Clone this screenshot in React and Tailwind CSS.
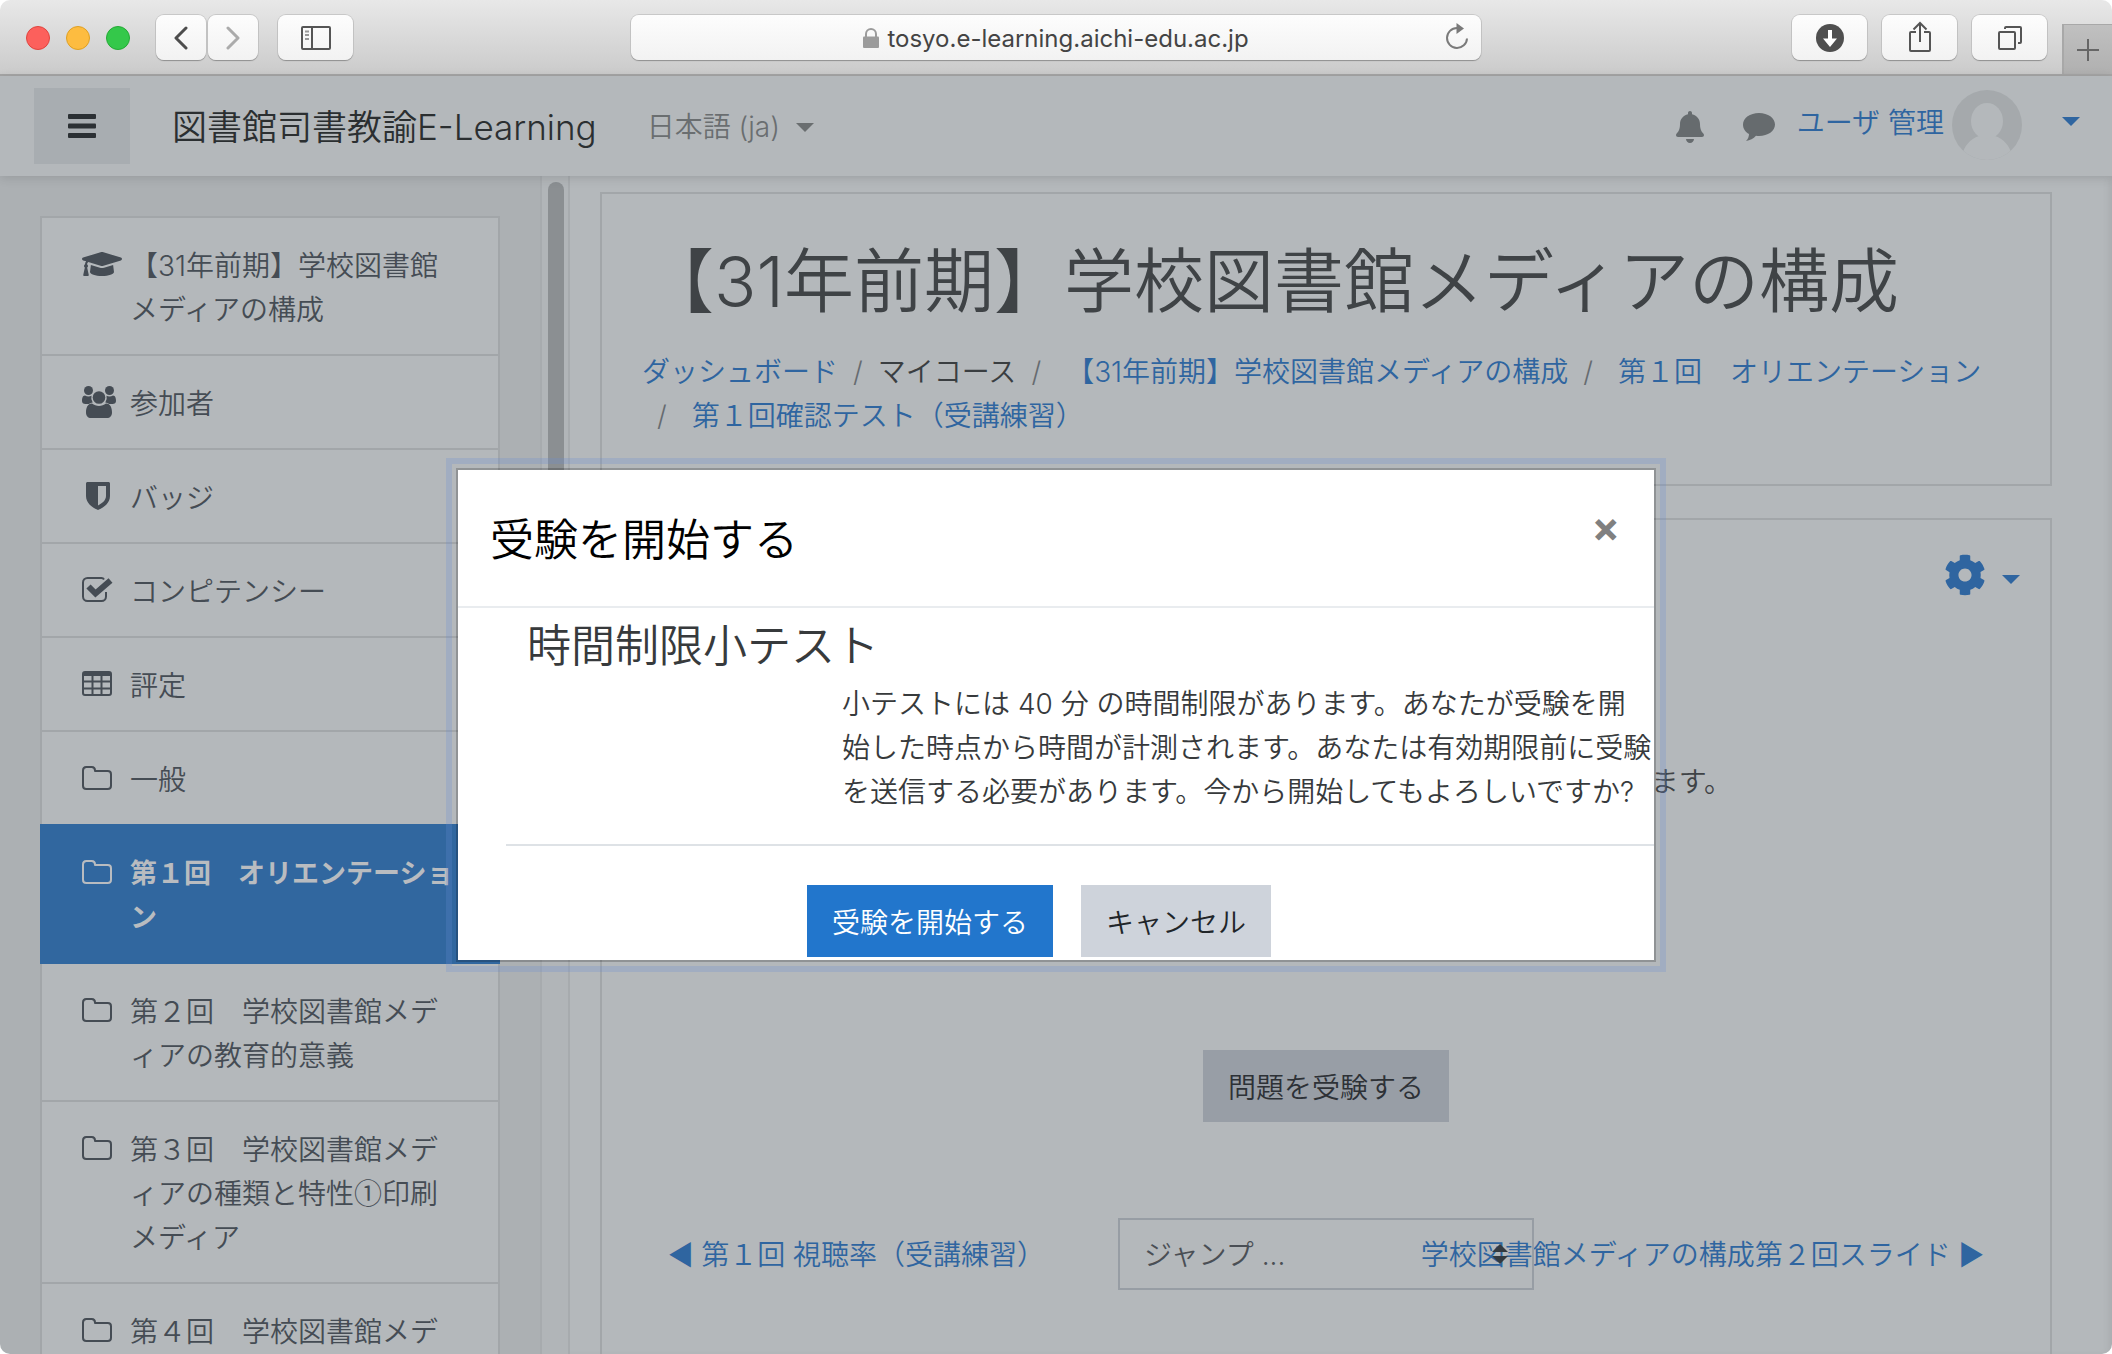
import React from 'react';
import { FaBell, FaCog, FaGraduationCap } from 'react-icons/fa';

const navItems = [
  { id: 'course', icon: 'course', label: '【31年前期】学校図書館メディアの構成' },
  { id: 'users', icon: 'users', label: '参加者' },
  { id: 'badges', icon: 'badge', label: 'バッジ' },
  { id: 'competencies', icon: 'check', label: 'コンピテンシー' },
  { id: 'grades', icon: 'grades', label: '評定' },
  { id: 'general', icon: 'folder', label: '一般' },
  { id: 'section-1', icon: 'folder', label: '第１回　オリエンテーション', active: true },
  { id: 'section-2', icon: 'folder', label: '第２回　学校図書館メディアの教育的意義' },
  {
    id: 'section-3',
    icon: 'folder',
    // Inter's circled digit is too wide, take it from the CJK face
    label: <>第３回　学校図書館メディアの種類と特性<span className="leading-none font-['Noto_Sans_CJK_JP',sans-serif]">①</span>印刷メディア</>,
  },
  { id: 'section-4', icon: 'folder', label: '第４回　学校図書館メデ' },
];

function FolderIcon() {
  return (
    <svg viewBox="0 0 30 24" className="w-[30px] h-6" fill="none" stroke="currentColor" strokeWidth="2" strokeLinejoin="round">
      <path d="M1 4.500C1 2.500 2.300 1 4.300 1h5.400c2 0 3.300 1.500 3.300 3.500V5h12.700C27.700 5 29 6.300 29 8.200v11.500c0 2-1.300 3.300-3.300 3.300H4.300C2.300 23 1 21.700 1 19.700z" />
    </svg>
  );
}

function UsersIcon() {
  return (
    <svg viewBox="0 0 34 32" className="w-[34px] h-8" fill="currentColor">
      <circle cx="6.500" cy="4.500" r="4.500" />
      <circle cx="27.500" cy="4.500" r="4.500" />
      <path d="M3 9.500c2 1.300 4.500 1.300 6.500.3a8 8 0 0 0 1.200 6.700c-1.500.1-2.800.6-3.900 1.500H3.500C1.300 18 0 17 0 15c0-2.500.6-5.500 3-5.500zM31 9.500c-2 1.300-4.500 1.300-6.500.3a8 8 0 0 1-1.200 6.700c1.500.1 2.800.6 3.900 1.500h3.300c2.200 0 3.500-1 3.500-3 0-2.500-.6-5.500-3-5.500z" />
      <circle cx="17" cy="11.500" r="6.300" />
      <path d="M10 17.500c4 3.300 10 3.300 14 0 4.500 0 6 4.500 6 9 0 3.500-2 5.500-5 5.500H9c-3 0-5-2-5-5.500 0-4.500 1.500-9 6-9z" />
    </svg>
  );
}

function ShieldIcon() {
  return (
    <svg viewBox="0 0 24 28" className="w-6 h-7 ml-1" fill="currentColor">
      <path fillRule="evenodd" d="M1.500 0h21c.8 0 1.500.7 1.500 1.500V14c0 7-6 11.500-12 14C6 25.500 0 21 0 14V1.500C0 .7.7 0 1.500 0zM12 4v19.500c4.500-2.300 8-5.500 8-9.500V4z" />
    </svg>
  );
}

function CheckIcon() {
  return (
    <svg viewBox="0 0 31 26" className="w-[31px] h-[26px]" fill="none" stroke="currentColor">
      <path strokeWidth="2" d="M22 2.500C21.500 1.500 20.500 1 19.500 1H5.500C3 1 1 3 1 5.500v14C1 22 3 24 5.500 24h14c2.500 0 4.500-2 4.500-4.500V15" />
      <path strokeWidth="6" d="M6.500 9.500l7 7L28.500 3.500" />
    </svg>
  );
}

function GradesIcon() {
  return (
    <svg viewBox="0 0 30 26" className="w-[30px] h-[26px]" fill="none" stroke="currentColor" strokeWidth="2">
      <rect x="1" y="1" width="28" height="23" rx="2" />
      <path strokeWidth="4" d="M1 3h28" />
      <path d="M1 10.500h28M1 17.500h28M10.500 2v22M19.500 2v22" />
    </svg>
  );
}

function NavIcon({ name }) {
  if (name === 'course') return <FaGraduationCap className="w-10 h-8" />;
  if (name === 'users') return <UsersIcon />;
  if (name === 'badge') return <ShieldIcon />;
  if (name === 'check') return <CheckIcon />;
  if (name === 'grades') return <GradesIcon />;
  return <FolderIcon />;
}

function Caret({ className }) {
  return (
    <svg viewBox="0 0 18 9" className={className} fill="currentColor">
      <path d="M0 0h18L9 9z" />
    </svg>
  );
}

function ToolButton({ label, className = 'w-[75px]', children }) {
  return (
    <button
      aria-label={label}
      className={`${className} h-[45px] shrink-0 flex items-center justify-center rounded-lg bg-gradient-to-b from-[#fdfdfd] to-[#f2f2f2] shadow-[0_1px_1px_#8f8f8f,0_0_0_1px_#c8c8c8] text-[#555]`}
    >
      {children}
    </button>
  );
}

function BrowserBar() {
  return (
    <div className="h-[76px] shrink-0 flex items-center bg-gradient-to-b from-[#e8e8e8] to-[#cbcbcb] border-b-2 border-[#a5a5a5] pl-[26px] pt-px">
      <div className="flex gap-4">
        <span className="w-6 h-6 rounded-full bg-[#fc605c] border border-[#e0443e]"></span>
        <span className="w-6 h-6 rounded-full bg-[#fdbc40] border border-[#dfa023]"></span>
        <span className="w-6 h-6 rounded-full bg-[#34c84a] border border-[#24aa35]"></span>
      </div>
      <div className="ml-[26px] flex gap-[2px]">
        <ToolButton label="戻る" className="w-[50px]">
          <svg viewBox="0 0 14 24" className="w-[14px] h-6" fill="none" stroke="#4d4d4d" strokeWidth="3" strokeLinecap="round" strokeLinejoin="round">
            <path d="M12 2L2 12l10 10" />
          </svg>
        </ToolButton>
        <ToolButton label="進む" className="w-[50px]">
          <svg viewBox="0 0 14 24" className="w-[14px] h-6" fill="none" stroke="#ababab" strokeWidth="3" strokeLinecap="round" strokeLinejoin="round">
            <path d="M2 2l10 10L2 22" />
          </svg>
        </ToolButton>
      </div>
      <div className="ml-5">
        <ToolButton label="サイドバー">
          <svg viewBox="0 0 30 24" className="w-[30px] h-6" fill="none" stroke="currentColor" strokeWidth="2">
            <rect x="1" y="1" width="28" height="22" rx="1" />
            <path d="M11 1v22" />
            <path stroke="#999" d="M4 5.500h4M4 9h4M4 13h4" />
          </svg>
        </ToolButton>
      </div>

      {/* Address field */}
      <div className="ml-[278px] flex-1 h-[45px] relative flex items-center justify-center gap-2 rounded-lg bg-gradient-to-b from-[#fdfdfd] to-[#f2f2f2] shadow-[0_1px_1px_#8f8f8f,0_0_0_1px_#c8c8c8]">
        <svg viewBox="0 0 16 20" className="w-4 h-5 text-[#9b9b9b]" fill="currentColor">
          <rect x="0" y="8.500" width="16" height="11.500" rx="1" />
          <path fill="none" stroke="currentColor" strokeWidth="2" d="M3 9V6a5 5 0 0 1 10 0v3" />
        </svg>
        <span className="pt-[2px] text-2xl font-normal text-[#444]">tosyo.e-learning.aichi-edu.ac.jp</span>
        <button aria-label="再読み込み" className="absolute right-3 top-2 text-[#7a7a7a]">
          <svg viewBox="0 0 24 28" className="w-6 h-7" fill="none" stroke="currentColor" strokeWidth="2">
            <path d="M22 15.500a10 10 0 1 1-10-10.500h2" />
            <path fill="currentColor" stroke="none" d="M11.500 0l7.500 5.500-7.500 5.500z" />
          </svg>
        </button>
      </div>

      <div className="ml-[311px] flex gap-[15px]">
        <ToolButton label="ダウンロード">
          <svg viewBox="0 0 28 28" className="w-7 h-7">
            <circle cx="14" cy="14" r="14" fill="#4f4f4f" />
            <path d="M12 6h4v8.500h5L14 23l-7-8.500h5z" fill="#fff" />
          </svg>
        </ToolButton>
        <ToolButton label="共有">
          <svg viewBox="0 0 24 32" className="w-6 h-8 mb-[2px]" fill="none" stroke="currentColor" strokeWidth="2">
            <path d="M8 11H3c-.6 0-1 .4-1 1v17c0 .6.400 1 1 1h18c.600 0 1-.4 1-1V12c0-.6-.4-1-1-1h-5M12 21V2M5.500 8.500L12 2l6.500 6.500" />
          </svg>
        </ToolButton>
        <ToolButton label="タブ一覧">
          <svg viewBox="0 0 26 26" className="w-[26px] h-[26px]" fill="none" stroke="currentColor" strokeWidth="2">
            <rect x="2" y="7" width="16" height="17" rx="1" />
            <path d="M8 4V3c0-.6.400-1 1-1h14c.600 0 1 .400 1 1v14c0 .600-.4 1-1 1h-2" />
          </svg>
        </ToolButton>
      </div>
      <button aria-label="新規タブ" className="ml-[15px] w-[50px] h-[50px] self-end flex items-center justify-center bg-gradient-to-b from-[#c0c0c0] to-[#b0b0b0] border-l-2 border-t border-[#a8a8a8]">
        <svg viewBox="0 0 22 22" className="w-[22px] h-[22px]" stroke="#666" strokeWidth="2">
          <path d="M11 0v22M0 11h22" />
        </svg>
      </button>
    </div>
  );
}

function SiteHeader() {
  return (
    <header className="relative z-10 h-[100px] shrink-0 flex items-center bg-[#b4b8bb] pl-[34px] pr-8 shadow-[0_2px_10px_rgba(0,0,0,0.12)]">
      <button aria-label="メニュー" className="w-24 h-[76px] flex items-center justify-center bg-[#a8adb1] text-[#2b3034]">
        <svg viewBox="0 0 28 24" className="w-7 h-6" fill="currentColor">
          <rect width="28" height="5" rx="1" />
          <rect y="9.500" width="28" height="5" rx="1" />
          <rect y="19" width="28" height="5" rx="1" />
        </svg>
      </button>
      <a href="#" className="ml-[42px] pt-[2px] text-[35px] leading-[52px] text-[#2b2f31] whitespace-nowrap">図書館司書教諭E-Learning</a>
      <button className="ml-[50px] pt-[2px] flex items-center gap-4 leading-[44px] text-[#6a6e70] whitespace-nowrap">
        日本語 (ja)
        <Caret className="w-[18px] h-[9px]" />
      </button>
      <div className="ml-auto pt-[2px] flex items-center text-[#666b6e]">
        <button aria-label="通知">
          <FaBell className="w-[30px] h-8" />
        </button>
        <button aria-label="メッセージ" className="ml-[38px]">
          <svg viewBox="0 0 32 28" className="w-8 h-7" fill="currentColor">
            <path d="M16 0c9 0 16 5 16 11.500S25 23 16 23c-1 0-2-.1-3-.2C10.500 25.500 7 27.500 3 28c2-2 3-4.500 3-7-3.700-2-6-5.500-6-9.500C0 5 7 0 16 0z" />
          </svg>
        </button>
        <button className="ml-[22px] flex items-center text-[#2f65a0] pb-1">
          <span className="leading-[44px] pb-1 whitespace-nowrap">ユーザ 管理</span>
          <svg viewBox="0 0 70 70" className="ml-2 w-[70px] h-[70px]">
            <defs>
              <clipPath id="avatar">
                <circle cx="35" cy="35" r="35" />
              </clipPath>
            </defs>
            <g clipPath="url(#avatar)">
              <rect width="70" height="70" fill="#a5a9ac" />
              <ellipse cx="35" cy="31" rx="16" ry="18" fill="#b4b8bb" />
              <path d="M10 66c2-10 8-17 17-20 5 3 11 3 16 0 9 3 15 10 17 20v6H10z" fill="#b4b8bb" />
            </g>
          </svg>
          <Caret className="ml-10 mb-2 w-[18px] h-[9px]" />
        </button>
      </div>
    </header>
  );
}

function SideNav() {
  return (
    <aside className="w-[540px] shrink-0 bg-[#acb0b3] pt-10 px-10 overflow-hidden">
      <nav className="border-2 border-[#a2a6a9] bg-[#b4b8bb]">
        {navItems.map((item) => (
          <a
            key={item.id}
            href="#"
            className={
              item.active
                ? 'relative flex -mx-[2px] -mt-[2px] pl-[42px] pr-11 pt-[26px] pb-[22px] border-b-2 border-[#31679f] bg-[#31679f] text-[#b9bcc0] font-bold text-[27px]'
                : 'flex pl-10 pr-[42px] pt-6 pb-[22px] border-b-2 border-[#a2a6a9] text-[#454c54]'
            }
          >
            <span className="w-12 h-11 shrink-0 flex items-center">
              <NavIcon name={item.icon} />
            </span>
            <span className="pt-[2px] leading-[44px]">{item.label}</span>
          </a>
        ))}
      </nav>
    </aside>
  );
}

function Breadcrumb() {
  const slash = <span className="px-[15px] text-[#666b70]">/</span>;
  return (
    <ol className="flex flex-wrap leading-[44px] text-[#2f65a0]">
      <li><a href="#">ダッシュボード</a></li>
      <li className="text-[#3a3e41]">{slash}マイコース</li>
      <li>{slash}<a href="#" className="ml-[10px]">【31年前期】学校図書館メディアの構成</a></li>
      <li>{slash}<a href="#" className="ml-[10px]">第１回　オリエンテーション</a></li>
      <li>{slash}<a href="#" className="ml-[10px]">第１回確認テスト（受講練習）</a></li>
    </ol>
  );
}

function MainContent() {
  return (
    <main className="flex-1 min-w-0 bg-[#b4b8bb] pt-4 pl-[30px] pr-[60px] overflow-hidden shadow-[inset_-6px_0_8px_-4px_rgba(0,0,0,0.08)]">
      <section className="border-2 border-[#a2a6a9] px-10 pt-11 pb-[46px]">
        <h1 className="pl-[2px] text-[70px] leading-[88px] mb-6 text-[#3f4346] whitespace-nowrap">【31年前期】学校図書館メディアの構成</h1>
        <Breadcrumb />
      </section>

      <section className="mt-8 h-[900px] border-2 border-[#a2a6a9] px-10 pt-[34px]">
        <div className="flex justify-end">
          <button aria-label="設定" className="-mr-[10px] flex items-center gap-4 text-[#2f65a0]">
            <FaCog className="w-[42px] h-[42px]" />
            <Caret className="mt-2 w-[18px] h-[9px]" />
          </button>
        </div>
        <p className="mt-[164px] pr-[278px] text-right leading-[44px] text-[#3f4346]">ます。</p>
        <div className="mt-[246px] flex justify-center">
          <button className="h-[72px] px-[25px] pt-1 bg-[#989ea6] text-[#2d3136]">問題を受験する</button>
        </div>
        <div className="mt-24 grid grid-cols-3 items-center leading-[44px] text-[#2f65a0]">
          <a href="#" className="pl-[26px] pt-[2px] whitespace-nowrap">◀︎ 第１回 視聴率（受講練習）</a>
          <div className="relative px-5">
            <select aria-label="ジャンプ" className="w-full h-[72px] px-6 pt-[2px] appearance-none border-2 border-[#979da4] text-[#4a4f55]">
              <option>ジャンプ ...</option>
            </select>
            <svg viewBox="0 0 16 20" className="absolute right-[46px] top-[26px] w-4 h-5" fill="#343a40">
              <path d="M8 0l8 8H0zM0 12h16l-8 8z" />
            </svg>
          </div>
          <div className="pr-[26px] pt-[2px] flex justify-end">
            <a href="#" className="whitespace-nowrap">学校図書館メディアの構成第２回スライド ▶︎</a>
          </div>
        </div>
      </section>
    </main>
  );
}

function StartModal() {
  return (
    <div className="absolute inset-0 z-20 flex items-center justify-center">
      <div
        role="dialog"
        aria-labelledby="modal-title"
        className="w-[1200px] border-2 border-black/20 bg-white bg-clip-padding outline-[6px] outline-offset-4 outline-solid outline-[#688cd3]/25"
      >
        <div className="flex items-center justify-between h-[138px] pl-8 pr-[34px] border-b-2 border-[#e9ecef]">
          <h2 id="modal-title" className="pt-1 text-[44px] leading-[60px] text-black">受験を開始する</h2>
          <button aria-label="閉じる" className="mb-[22px] text-[42px] leading-[44px] font-bold text-[#808080]">×</button>
        </div>
        <form className="text-[#373a3c]" onSubmit={(e) => e.preventDefault()}>
          <h3 className="pl-[69px] pt-2 text-[44px] leading-[60px]">時間制限小テスト</h3>
          <p className="ml-auto mt-[6px] w-[812px] leading-[44px]">
            小テストには 40 分 の時間制限があります。あなたが受験を開<br />
            始した時点から時間が計測されます。あなたは有効期限前に受験<br />
            を送信する必要があります。今から開始してもよろしいですか?
          </p>
          <hr className="ml-12 mt-[30px] border-t-2 border-[#dee2e6]" />
          <div className="mt-[39px] mb-[3px] pl-[349px] flex gap-7">
            <button type="submit" className="h-[72px] px-[25px] pt-1 bg-[#2276cc] text-white">受験を開始する</button>
            <button type="button" className="h-[72px] px-[25px] pt-1 bg-[#ced3db] text-[#212529]">キャンセル</button>
          </div>
        </form>
      </div>
    </div>
  );
}

function App() {
  return (
    <div className="bg-white">
      <div lang="ja" className="h-screen flex flex-col overflow-hidden rounded-[10px] text-[28px] font-[350] font-['Inter','Noto_Sans_CJK_JP',sans-serif]">
        <BrowserBar />
        <div className="relative flex-1 min-h-0 flex flex-col">
          <SiteHeader />
          <div className="flex-1 min-h-0 flex">
            <SideNav />
            <div className="w-[30px] shrink-0 bg-[#b1b5b8] border-x-2 border-[#a7abae] pl-[6px] pt-[6px]">
              <div className="w-4 h-[380px] rounded-full bg-[#8b8f92]"></div>
            </div>
            <MainContent />
          </div>
          <StartModal />
        </div>
      </div>
    </div>
  );
}

export default App;
